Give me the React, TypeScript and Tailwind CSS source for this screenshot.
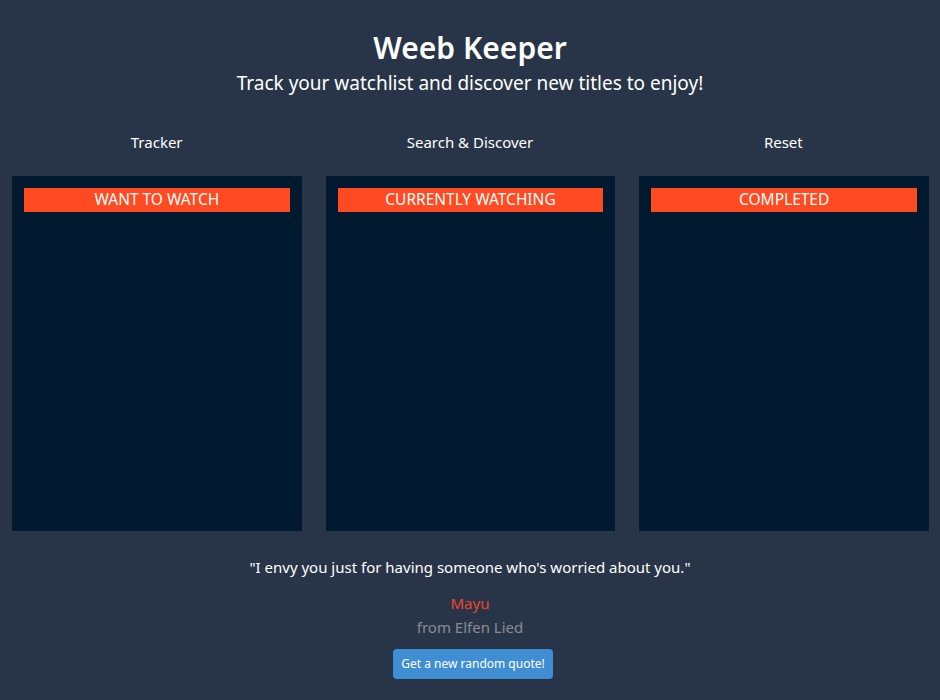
import React from "react";

const font = { fontFamily: '"Noto Sans", "Open Sans", sans-serif' };

function Panel({ title }: { title: string }) {
  return (
    <div className="bg-[#011a2f] h-[355px] p-3">
      <div className="bg-[#ff4a22] h-6 flex items-center justify-center text-white text-[15.5px] leading-none">
        {title}
      </div>
    </div>
  );
}

export default function App() {
  return (
    <div className="min-h-[700px] bg-[#283548] text-white" style={font}>
      <div className="pt-[28px] flex flex-col items-center">
        <h1 className="text-[30px] font-semibold leading-[40px]">Weeb Keeper</h1>
        <p className="text-[19px] leading-[28px] mt-[1px]">Track your watchlist and discover new titles to enjoy!</p>
      </div>
      <div className="grid grid-cols-3 gap-6 px-3 pt-[33px] text-[15px]">
        <div className="text-center leading-[24px]">Tracker</div>
        <div className="text-center leading-[24px]">Search &amp; Discover</div>
        <div className="text-center leading-[24px]">Reset</div>
      </div>
      <div className="grid grid-cols-3 gap-6 pl-3 pr-[11px] pt-[22px]">
        <Panel title="WANT TO WATCH" />
        <Panel title="CURRENTLY WATCHING" />
        <Panel title="COMPLETED" />
      </div>
      <div className="flex flex-col items-center pt-[24px]">
        <p className="text-[15px] leading-[24px]">"I envy you just for having someone who's worried about you."</p>
        <p className="text-[15px] leading-[24px] text-[#f0442c] mt-[12px]">Mayu</p>
        <p className="text-[15px] leading-[24px] text-[#8a8c90]">from Elfen Lied</p>
        <button className="mt-[10px] ml-[6px] bg-[#3f8ed4] rounded-[4px] w-[160px] h-[30px] text-[12px] text-white">
          Get a new random quote!
        </button>
      </div>
    </div>
  );
}
